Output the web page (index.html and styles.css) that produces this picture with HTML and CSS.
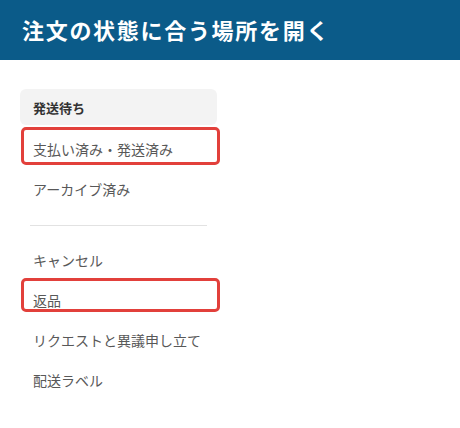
FILE: index.html
```html
<!DOCTYPE html>
<html lang="ja">
<head>
<meta charset="utf-8">
<link rel="stylesheet" href="styles.css">
</head>
<body>
<header class="topbar">
  <h1 class="title">注文の状態に合う場所を開く</h1>
</header>
<nav class="sidebar">
  <div class="group-head">発送待ち</div>
  <div class="item"><span class="mark mark-tall"></span>支払い済み・発送済み</div>
  <div class="item">アーカイブ済み</div>
  <div class="sep"></div>
  <div class="item">キャンセル</div>
  <div class="item"><span class="mark mark-short"></span>返品</div>
  <div class="item">リクエストと異議申し立て</div>
  <div class="item">配送ラベル</div>
</nav>
</body>
</html>
```
FILE: styles.css
```css
html, body {
  margin: 0;
  padding: 0;
  background: #ffffff;
  font-family: "Noto Sans CJK JP", "Noto Sans", sans-serif;
}
.topbar {
  height: 60px;
  background: #0b5b89;
  display: flex;
  align-items: center;
  padding: 0 0 3px 22px;
  box-sizing: border-box;
}
.title {
  margin: 0;
  color: #ffffff;
  font-size: 22px;
  font-weight: 700;
  letter-spacing: 1.7px;
  line-height: 1;
}
.sidebar {
  margin: 29px 0 0 20px;
  width: 197px;
  display: flex;
  flex-direction: column;
}
.group-head {
  height: 36px;
  background: #f3f3f3;
  border-radius: 6px;
  display: flex;
  align-items: center;
  padding-left: 13px;
  font-size: 13px;
  font-weight: 700;
  color: #333333;
  margin-bottom: 4px;
}
.item {
  position: relative;
  height: 40px;
  display: flex;
  align-items: center;
  padding-left: 13px;
  font-size: 14px;
  color: #585858;
}
.sep {
  height: 1px;
  background: #e2e2e2;
  margin: 16px 10px 14px 10px;
}
.mark {
  position: absolute;
  left: 1px;
  width: 199px;
  border: 3px solid #e2403b;
  border-radius: 5px;
  box-sizing: border-box;
}
.mark-tall {
  top: -2px;
  height: 38px;
}
.mark-short {
  top: -2px;
  height: 34px;
}
```
